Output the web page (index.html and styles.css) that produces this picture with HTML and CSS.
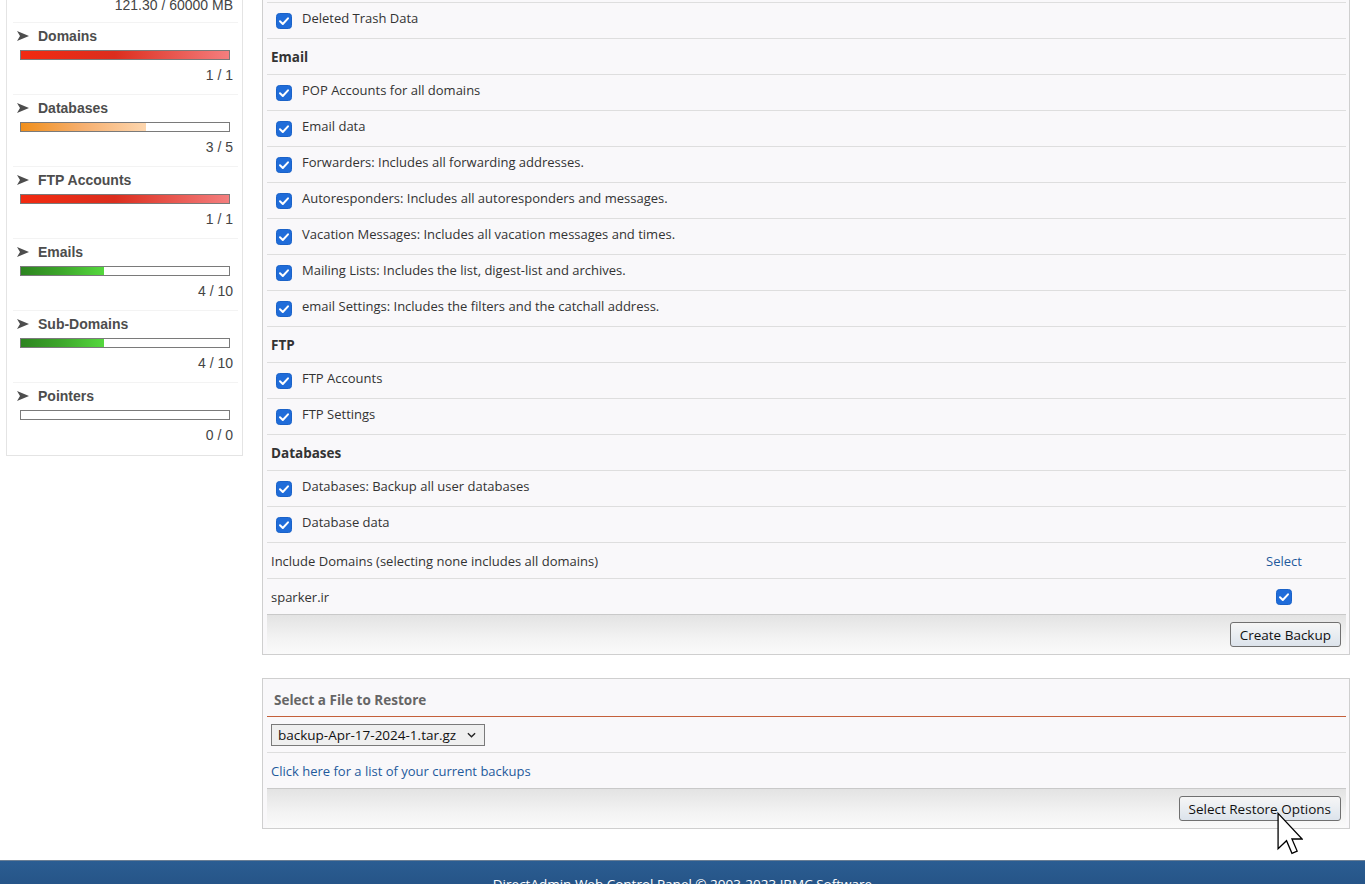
FILE: index.html
```html
<!DOCTYPE html>
<html>
<head>
<meta charset="utf-8">
<title>Backup / Restore</title>
<link rel="stylesheet" href="styles.css">
</head>
<body>
<div class="page">
  <aside class="sidebar">
    <div class="disk">121.30 / 60000 MB</div>
    <div class="stat">
      <div class="stat-title"><svg class="arrow" viewBox="0 0 12 10"><path d="M0 0 L12 5 L0 10 L3 5 Z"/></svg>Domains</div>
      <div class="bar"><div class="fill red" style="width:100%"></div></div>
      <div class="stat-val">1 / 1</div>
    </div>
    <div class="stat">
      <div class="stat-title"><svg class="arrow" viewBox="0 0 12 10"><path d="M0 0 L12 5 L0 10 L3 5 Z"/></svg>Databases</div>
      <div class="bar"><div class="fill orange" style="width:60%"></div></div>
      <div class="stat-val">3 / 5</div>
    </div>
    <div class="stat">
      <div class="stat-title"><svg class="arrow" viewBox="0 0 12 10"><path d="M0 0 L12 5 L0 10 L3 5 Z"/></svg>FTP Accounts</div>
      <div class="bar"><div class="fill red" style="width:100%"></div></div>
      <div class="stat-val">1 / 1</div>
    </div>
    <div class="stat">
      <div class="stat-title"><svg class="arrow" viewBox="0 0 12 10"><path d="M0 0 L12 5 L0 10 L3 5 Z"/></svg>Emails</div>
      <div class="bar"><div class="fill green" style="width:40%"></div></div>
      <div class="stat-val">4 / 10</div>
    </div>
    <div class="stat">
      <div class="stat-title"><svg class="arrow" viewBox="0 0 12 10"><path d="M0 0 L12 5 L0 10 L3 5 Z"/></svg>Sub-Domains</div>
      <div class="bar"><div class="fill green" style="width:40%"></div></div>
      <div class="stat-val">4 / 10</div>
    </div>
    <div class="stat">
      <div class="stat-title"><svg class="arrow" viewBox="0 0 12 10"><path d="M0 0 L12 5 L0 10 L3 5 Z"/></svg>Pointers</div>
      <div class="bar"></div>
      <div class="stat-val">0 / 0</div>
    </div>
  </aside>

  <main class="main">
    <section class="panel backup">
      <div class="row"><svg class="cb" viewBox="0 0 16 16"><rect x="0.5" y="0.5" width="15" height="15" rx="3"/><path d="M4 8.3 L6.8 11 L12 5.3"/></svg><span class="t">Email Trash</span></div>
      <div class="row"><svg class="cb" viewBox="0 0 16 16"><rect x="0.5" y="0.5" width="15" height="15" rx="3"/><path d="M4 8.3 L6.8 11 L12 5.3"/></svg><span class="t">Deleted Trash Data</span></div>
      <div class="row head">Email</div>
      <div class="row"><svg class="cb" viewBox="0 0 16 16"><rect x="0.5" y="0.5" width="15" height="15" rx="3"/><path d="M4 8.3 L6.8 11 L12 5.3"/></svg><span class="t">POP Accounts for all domains</span></div>
      <div class="row"><svg class="cb" viewBox="0 0 16 16"><rect x="0.5" y="0.5" width="15" height="15" rx="3"/><path d="M4 8.3 L6.8 11 L12 5.3"/></svg><span class="t">Email data</span></div>
      <div class="row"><svg class="cb" viewBox="0 0 16 16"><rect x="0.5" y="0.5" width="15" height="15" rx="3"/><path d="M4 8.3 L6.8 11 L12 5.3"/></svg><span class="t">Forwarders: Includes all forwarding addresses.</span></div>
      <div class="row"><svg class="cb" viewBox="0 0 16 16"><rect x="0.5" y="0.5" width="15" height="15" rx="3"/><path d="M4 8.3 L6.8 11 L12 5.3"/></svg><span class="t">Autoresponders: Includes all autoresponders and messages.</span></div>
      <div class="row"><svg class="cb" viewBox="0 0 16 16"><rect x="0.5" y="0.5" width="15" height="15" rx="3"/><path d="M4 8.3 L6.8 11 L12 5.3"/></svg><span class="t">Vacation Messages: Includes all vacation messages and times.</span></div>
      <div class="row"><svg class="cb" viewBox="0 0 16 16"><rect x="0.5" y="0.5" width="15" height="15" rx="3"/><path d="M4 8.3 L6.8 11 L12 5.3"/></svg><span class="t">Mailing Lists: Includes the list, digest-list and archives.</span></div>
      <div class="row"><svg class="cb" viewBox="0 0 16 16"><rect x="0.5" y="0.5" width="15" height="15" rx="3"/><path d="M4 8.3 L6.8 11 L12 5.3"/></svg><span class="t">email Settings: Includes the filters and the catchall address.</span></div>
      <div class="row head">FTP</div>
      <div class="row"><svg class="cb" viewBox="0 0 16 16"><rect x="0.5" y="0.5" width="15" height="15" rx="3"/><path d="M4 8.3 L6.8 11 L12 5.3"/></svg><span class="t">FTP Accounts</span></div>
      <div class="row"><svg class="cb" viewBox="0 0 16 16"><rect x="0.5" y="0.5" width="15" height="15" rx="3"/><path d="M4 8.3 L6.8 11 L12 5.3"/></svg><span class="t">FTP Settings</span></div>
      <div class="row head">Databases</div>
      <div class="row"><svg class="cb" viewBox="0 0 16 16"><rect x="0.5" y="0.5" width="15" height="15" rx="3"/><path d="M4 8.3 L6.8 11 L12 5.3"/></svg><span class="t">Databases: Backup all user databases</span></div>
      <div class="row"><svg class="cb" viewBox="0 0 16 16"><rect x="0.5" y="0.5" width="15" height="15" rx="3"/><path d="M4 8.3 L6.8 11 L12 5.3"/></svg><span class="t">Database data</span></div>
      <div class="row split">
        <span>Include Domains (selecting none includes all domains)</span>
        <a class="link col2" href="#">Select</a>
      </div>
      <div class="row split last">
        <span>sparker.ir</span>
        <svg class="cb col2" viewBox="0 0 16 16"><rect x="0.5" y="0.5" width="15" height="15" rx="3"/><path d="M4 8.3 L6.8 11 L12 5.3"/></svg>
      </div>
      <div class="pfoot"><button class="btn">Create Backup</button></div>
    </section>

    <section class="panel restore">
      <div class="rhead">Select a File to Restore</div>
      <div class="row plain">
        <span class="select">backup-Apr-17-2024-1.tar.gz<svg class="chev" viewBox="0 0 10 6"><path d="M1 1 L5 5 L9 1"/></svg></span>
      </div>
      <div class="row plain last"><a class="link" href="#">Click here for a list of your current backups</a></div>
      <div class="pfoot"><button class="btn">Select Restore Options</button></div>
    </section>
  </main>
</div>

<footer class="site-footer">DirectAdmin Web Control Panel © 2003-2023 JBMC Software</footer>

<svg class="cursor" viewBox="0 0 12 20"><path d="M0.5 0.5 L0.5 16.8 L4.4 13.1 L6.9 18.9 L9.3 17.9 L6.9 12.3 L11.6 12.3 Z"/></svg>
</body>
</html>
```

FILE: styles.css
```css
* { box-sizing: border-box; }

body {
  margin: 0;
  background: #fff;
  font-family: "Open Sans", "Noto Sans", sans-serif;
  font-size: 13px;
  color: #333;
}

.page {
  display: flex;
  align-items: flex-start;
  gap: 19px;
  padding: 0 15px 0 6px;
}

/* Sidebar */
.sidebar {
  width: 237px;
  flex: none;
  margin-top: -5px;
  border: 1px solid #e4e4e4;
  padding: 0 4px 1px 6px;
  font-family: "Liberation Sans", Arial, sans-serif;
  font-size: 14px;
  color: #444;
}

.disk {
  text-align: right;
  line-height: 18px;
  padding: 0 5px 8px 0;
}

.stat {
  border-top: 1px solid #f3f3f3;
  padding: 4px 5px 10px 4px;
}

.stat-title {
  display: flex;
  align-items: center;
  gap: 9px;
  font-weight: bold;
  line-height: 18px;
  color: #4d4d4d;
}

.arrow {
  width: 12px;
  height: 10px;
  fill: #4d4d4d;
  flex: none;
}

.bar {
  margin: 5px 0 0 3px;
  width: 210px;
  height: 10px;
  border: 1px solid #7a7a7a;
  background: #fff;
}

.fill { height: 100%; }
.fill.red { background: linear-gradient(90deg, #f22a10 0%, #dc2e1e 45%, #f47e7e 100%); }
.fill.orange { background: linear-gradient(90deg, #f08f1c 0%, #f6b070 50%, #fdd6ae 100%); }
.fill.green { background: linear-gradient(90deg, #2d8420 0%, #3ea82c 50%, #55d83e 100%); }

.stat-val {
  margin-top: 6px;
  line-height: 18px;
  text-align: right;
}

/* Main panels */
.main {
  width: 1088px;
  flex: none;
}

.panel {
  border: 1px solid #cfcfcf;
  background: #f9f8fa;
  padding: 0 3px 0 4px;
}

.backup { margin-top: -34px; }
.restore { margin-top: 23px; }

.row {
  display: flex;
  align-items: center;
  height: 36px;
  border-bottom: 1px solid #dedede;
  padding-left: 9px;
}

.row .t { margin-bottom: 5px; }

.row.head {
  padding-left: 4px;
  font-weight: bold;
  font-size: 13.5px;
}

.row.split {
  display: grid;
  grid-template-columns: 1fr 124px;
  align-items: center;
  padding-left: 4px;
}

.row.plain { padding-left: 4px; }

.row.last {
  height: 35px;
  border-bottom: none;
}

.col2 { justify-self: center; }

.cb {
  width: 16px;
  height: 16px;
  margin-right: 10px;
  flex: none;
}
.cb rect { fill: #1f6cd9; stroke: #1a62c8; stroke-width: 1; }
.cb path { fill: none; stroke: #fff; stroke-width: 2; stroke-linecap: round; stroke-linejoin: round; }
.row.split .cb { margin-right: 0; }

.link {
  color: #1f5a9c;
  text-decoration: none;
}

.pfoot {
  height: 40px;
  border-top: 1px solid #c9c9c9;
  background: linear-gradient(#e3e3e3, #f3f3f3 60%, #fafafa);
  display: flex;
  justify-content: flex-end;
  align-items: center;
  padding-right: 5px;
}

.btn {
  font-family: "Open Sans", "Noto Sans", sans-serif;
  font-size: 13.5px;
  color: #111;
  height: 25px;
  padding: 0 9px;
  border: 1px solid #707070;
  border-radius: 3px;
  background: linear-gradient(#f6f6f6, #e9edf1 50%, #dce3eb);
}

.rhead {
  padding: 11px 0 6px 7px;
  line-height: 20px;
  border-bottom: 1px solid #c4603a;
  font-weight: bold;
  font-size: 13.5px;
  color: #666;
}

.select {
  display: inline-flex;
  align-items: center;
  justify-content: space-between;
  width: 214px;
  height: 22px;
  padding: 0 8px 0 6px;
  border: 1px solid #7a7a7a;
  background: #efefef;
  color: #111;
  font-size: 13.5px;
}

.chev {
  width: 9px;
  height: 6px;
  fill: none;
  stroke: #222;
  stroke-width: 1.5;
}

/* Site footer */
.site-footer {
  margin-top: 31px;
  border-top: 1px solid #6b7f95;
  background: linear-gradient(#2b5d92, #1f4a7a);
  color: #fff;
  text-align: center;
  padding: 13px 0 20px;
  line-height: 20px;
  font-size: 13.5px;
}

.cursor {
  position: absolute;
  left: 1277px;
  top: 812px;
  width: 26px;
  height: 44px;
}
.cursor path {
  fill: #fff;
  stroke: #000;
  stroke-width: 0.6;
  stroke-linejoin: miter;
}
```
